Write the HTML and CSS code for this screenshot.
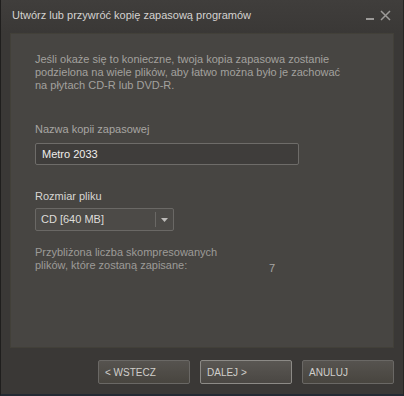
FILE: index.html
```html
<!DOCTYPE html>
<html lang="pl">
<head>
<meta charset="utf-8">
<link rel="stylesheet" href="styles.css">
</head>
<body>
<div class="window">
  <div class="titlebar">
    <span class="title">Utwórz lub przywróć kopię zapasową programów</span>
    <div class="controls">
      <span class="min"></span>
      <svg class="close" width="11" height="11" viewBox="0 0 11 11"><path d="M1 1 L10 10 M10 1 L1 10" stroke="#9c9a98" stroke-width="1.5" fill="none"/></svg>
    </div>
  </div>
  <div class="panel">
    <p class="intro">Jeśli okaże się to konieczne, twoja kopia zapasowa zostanie podzielona na wiele plików, aby łatwo można było je zachować na płytach CD-R lub DVD-R.</p>
    <div class="label">Nazwa kopii zapasowej</div>
    <div class="input">Metro 2033</div>
    <div class="label bright">Rozmiar pliku</div>
    <div class="select">
      <span class="sel-text">CD [640 MB]</span>
      <span class="sel-btn"><svg width="7" height="4" viewBox="0 0 7 4"><path d="M0 0 H7 L3.5 4 Z" fill="#bdbbb9"/></svg></span>
    </div>
    <div class="estimate">
      <div class="est-text">Przybliżona liczba skompresowanych<br>plików, które zostaną zapisane:</div>
      <div class="est-num">7</div>
    </div>
  </div>
  <div class="footer">
    <button class="btn">&lt; WSTECZ</button>
    <button class="btn primary">DALEJ &gt;</button>
    <button class="btn">ANULUJ</button>
  </div>
</div>
</body>
</html>
```
FILE: styles.css
```css
html, body {
  margin: 0;
  padding: 0;
  background: #3a3836;
}
.window {
  width: 404px;
  height: 396px;
  box-sizing: border-box;
  border-left: 1px solid #1f1e1d;
  border-right: 1px solid #262523;
  border-bottom: 2px solid #232a33;
  background: #3a3836;
  font-family: "Liberation Sans", Arial, sans-serif;
  font-size: 11px;
  display: flex;
  flex-direction: column;
}
.titlebar {
  height: 33px;
  flex: none;
  display: flex;
  align-items: flex-start;
  justify-content: space-between;
  padding: 8px 11px 0 11px;
  box-sizing: border-box;
  background: linear-gradient(#403e3c, #3a3836);
}
.title {
  color: #d4d2d0;
  font-size: 11px;
  line-height: 14px;
}
.controls {
  display: flex;
  align-items: flex-end;
  gap: 6px;
  padding-top: 2px;
  margin-right: 1px;
}
.min {
  display: block;
  width: 8px;
  height: 2px;
  background: #9c9a98;
  margin-bottom: 1px;
}
.close { display: block; }
.panel {
  margin: 0 9px 0 9px;
  height: 315px;
  box-sizing: border-box;
  background: #474542;
  border: 1px solid #424039;
  padding: 19px 24px 0 24px;
  color: #a19f9c;
}
.intro {
  margin: 0;
  width: 310px;
  line-height: 13px;
  color: #a3a19e;
}
.label {
  margin-top: 30px;
  line-height: 14px;
  color: #a8a6a3;
}
.label.bright {
  margin-top: 24px;
  color: #d8d6d3;
}
.input {
  margin-top: 7px;
  width: 264px;
  height: 22px;
  box-sizing: border-box;
  border: 1px solid #6e6c69;
  border-radius: 2px;
  background: #3f3d3b;
  color: #f0eeeb;
  padding: 0 6px;
  line-height: 20px;
  font-size: 11px;
}
.select {
  margin-top: 5px;
  width: 139px;
  height: 23px;
  box-sizing: border-box;
  border: 1px solid #6a6865;
  border-radius: 2px;
  background: #4c4a47;
  display: flex;
  align-items: stretch;
}
.sel-text {
  flex: 1;
  color: #dedcd9;
  padding-left: 5px;
  line-height: 21px;
}
.sel-btn {
  width: 17px;
  border-left: 1px solid #6a6865;
  margin: 3px 0;
  display: flex;
  align-items: center;
  justify-content: center;
}
.estimate {
  margin-top: 15px;
  display: flex;
  align-items: flex-end;
}
.est-text {
  width: 234px;
  flex: none;
  line-height: 13px;
  color: #9d9b98;
}
.est-num {
  color: #a8a6a3;
  line-height: 13px;
  position: relative;
  top: 3px;
}
.footer {
  display: flex;
  justify-content: flex-end;
  gap: 10px;
  padding: 12px 9px 0 0;
}
.btn {
  width: 92px;
  height: 24px;
  box-sizing: border-box;
  border: 1px solid #6a6865;
  border-radius: 2px;
  background: linear-gradient(#56534f, #48453f);
  color: #d0cecb;
  font-family: "Liberation Sans", Arial, sans-serif;
  font-size: 10px;
  text-align: left;
  padding: 0 0 0 6px;
  cursor: pointer;
}
.btn.primary {
  border-color: #8c8a86;
  background: linear-gradient(#5a5753, #4a4743);
}
```
